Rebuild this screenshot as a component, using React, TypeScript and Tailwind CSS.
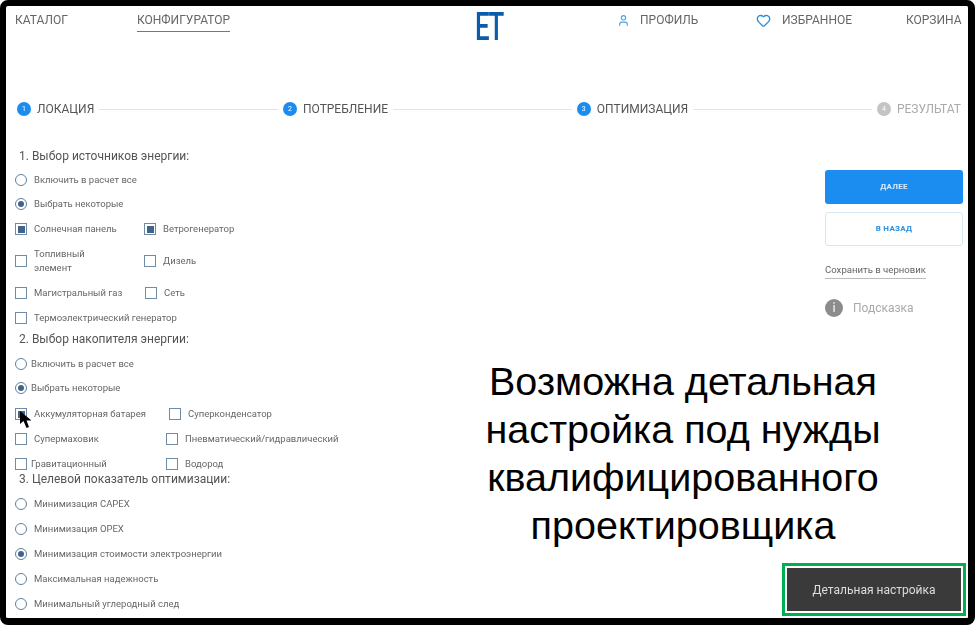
import { Heart, User } from "lucide-react"

const font = { fontFamily: "Roboto, 'Noto Sans', sans-serif" }

function Radio({ checked }: { checked?: boolean }) {
  return (
    <span className="flex h-3 w-3 shrink-0 items-center justify-center rounded-full border-[1.5px] border-[#5f7f9c]">
      {checked && <span className="h-1.5 w-1.5 rounded-full bg-[#41648c]" />}
    </span>
  )
}

function Check({ checked }: { checked?: boolean }) {
  return (
    <span className="flex h-3 w-3 shrink-0 items-center justify-center border-[1.5px] border-[#6f8ba5]">
      {checked && <span className="h-[7px] w-[7px] bg-[#41648c]" />}
    </span>
  )
}

function Label({ children }: { children: React.ReactNode }) {
  return <span className="text-[9.5px] leading-[14px] text-[#666]">{children}</span>
}

function Heading({ children, className }: { children: React.ReactNode; className: string }) {
  return <h2 className={`pl-[4px] text-[12px] font-normal leading-4 text-[#555] ${className}`}>{children}</h2>
}

function Step({ n, label, active }: { n: number; label: string; active?: boolean }) {
  return (
    <div className="flex shrink-0 items-center gap-[6px]">
      <span
        className={`flex h-[14px] w-[14px] items-center justify-center rounded-full text-[7px] text-white ${active ? "bg-[#1b8df0]" : "bg-[#c4c4c4]"}`}
      >
        {n}
      </span>
      <span className={`text-[12px] ${active ? "text-[#555]" : "text-[#aaa]"}`}>{label}</span>
    </div>
  )
}

function StepLine() {
  return <div className="mx-[5px] h-px flex-1 bg-[#e4e4e4]" />
}

export default function App() {
  return (
    <div className="h-[625px] w-[975px] overflow-hidden bg-white" style={font}>
      <div className="relative flex h-full flex-col rounded-lg border-[6px] border-r-[7px] border-b-[7px] border-black bg-white">
        <header className="flex h-[31px] items-start text-[12px] text-[#666] blur-[0.4px]">
          <a className="ml-[9px] mt-[5px] w-[122px]">КАТАЛОГ</a>
          <a className="mt-[5px] h-[21px] w-[93px] whitespace-nowrap border-b border-[#777]">КОНФИГУРАТОР</a>
          <div className="ml-[245px] mt-[1px] w-[25px] origin-left scale-x-[0.68] text-[38px] font-medium leading-[40px] tracking-[-2px] text-[#0b5cab]">ET</div>
          <div className="ml-[117px] mt-[5px] flex w-[139px] items-center">
            <User size={13} strokeWidth={2} className="text-[#4aa3e8]" />
            <span className="ml-[10px]">ПРОФИЛЬ</span>
          </div>
          <div className="mt-[5px] flex w-[150px] items-center">
            <Heart size={15} strokeWidth={2.2} className="text-[#2b8fe0]" />
            <span className="ml-[11px]">ИЗБРАННОЕ</span>
          </div>
          <a className="mt-[5px]">КОРЗИНА</a>
        </header>

        <nav className="mx-[11px] mt-[65px] flex h-[14px] w-[944px] items-center blur-[0.4px]">
          <Step n={1} label="ЛОКАЦИЯ" active />
          <StepLine />
          <Step n={2} label="ПОТРЕБЛЕНИЕ" active />
          <StepLine />
          <Step n={3} label="ОПТИМИЗАЦИЯ" active />
          <StepLine />
          <Step n={4} label="РЕЗУЛЬТАТ" />
        </nav>

        <main className="flex flex-1">
          <section className="w-[440px] pl-[9px] blur-[0.4px]">
            <Heading className="mt-[32px]">1. Выбор источников энергии:</Heading>
            <div className="mt-[9px] flex h-[14px] items-center gap-[7px]"><Radio /><Label>Включить в расчет все</Label></div>
            <div className="mt-[10px] flex h-[14px] items-center gap-[7px]"><Radio checked /><Label>Выбрать некоторые</Label></div>
            <div className="mt-[11px] flex h-[14px] items-center">
              <div className="flex w-[129px] items-center gap-[7px]"><Check checked /><Label>Солнечная панель</Label></div>
              <div className="flex items-center gap-[7px]"><Check checked /><Label>Ветрогенератор</Label></div>
            </div>
            <div className="mt-[7px] flex h-[36px] items-center">
              <div className="flex w-[129px] items-center gap-[7px]">
                <Check />
                <span className="flex w-[70px] flex-col"><Label>Топливный элемент</Label></span>
              </div>
              <div className="flex items-center gap-[7px]"><Check /><Label>Дизель</Label></div>
            </div>
            <div className="mt-[7px] flex h-[14px] items-center">
              <div className="flex w-[130px] items-center gap-[7px]"><Check /><Label>Магистральный газ</Label></div>
              <div className="flex items-center gap-[7px]"><Check /><Label>Сеть</Label></div>
            </div>
            <div className="mt-[11px] flex h-[14px] items-center gap-[7px]"><Check /><Label>Термоэлектрический генератор</Label></div>

            <Heading className="mt-[6px]">2. Выбор накопителя энергии:</Heading>
            <div className="mt-[10px] flex h-[14px] items-center gap-[4px]"><Radio /><Label>Включить в расчет все</Label></div>
            <div className="mt-[10px] flex h-[14px] items-center gap-[4px]"><Radio checked /><Label>Выбрать некоторые</Label></div>
            <div className="mt-[12px] flex h-[14px] items-center">
              <div className="flex w-[154px] items-center gap-[7px]"><Check checked /><Label>Аккумуляторная батарея</Label></div>
              <div className="flex items-center gap-[7px]"><Check /><Label>Суперконденсатор</Label></div>
            </div>
            <div className="mt-[11px] flex h-[14px] items-center">
              <div className="flex w-[151px] items-center gap-[7px]"><Check /><Label>Супермаховик</Label></div>
              <div className="flex items-center gap-[7px]"><Check /><Label>Пневматический/гидравлический</Label></div>
            </div>
            <div className="mt-[11px] flex h-[14px] items-center">
              <div className="flex w-[151px] items-center gap-[4px]"><Check /><Label>Гравитационный</Label></div>
              <div className="flex items-center gap-[7px]"><Check /><Label>Водород</Label></div>
            </div>

            <Heading className="mt-0">3. Целевой показатель оптимизации:</Heading>
            <div className="mt-[10px] flex h-[14px] items-center gap-[7px]"><Radio /><Label>Минимизация CAPEX</Label></div>
            <div className="mt-[11px] flex h-[14px] items-center gap-[7px]"><Radio /><Label>Минимизация OPEX</Label></div>
            <div className="mt-[11px] flex h-[14px] items-center gap-[7px]"><Radio checked /><Label>Минимизация стоимости электроэнергии</Label></div>
            <div className="mt-[11px] flex h-[14px] items-center gap-[7px]"><Radio /><Label>Максимальная надежность</Label></div>
            <div className="mt-[11px] flex h-[14px] items-center gap-[7px]"><Radio /><Label>Минимальный углеродный след</Label></div>
          </section>

          <section className="flex flex-1 flex-col">
            <div className="ml-[379px] mt-[54px] flex w-[138px] flex-col blur-[0.4px]">
              <button className="h-[34px] rounded-[3px] bg-[#1b8df0] text-[8px] font-bold tracking-[0.3px] text-[#d8ecfc]">ДАЛЕЕ</button>
              <button className="mt-[8px] h-[34px] rounded-[3px] border border-[#d5e8f5] bg-white text-[8px] font-bold tracking-[0.3px] text-[#2b8fe0]">В НАЗАД</button>
              <a className="mt-[18px] w-fit border-b border-[#bbb] pb-[2px] text-[9.6px] leading-3 text-[#666]">Сохранить в черновик</a>
              <div className="mt-[20px] flex items-center gap-[10px]">
                <span className="flex h-[18px] w-[18px] items-center justify-center rounded-full bg-[#8c8c8c] text-[12px] font-bold text-[#ddd]">i</span>
                <span className="text-[12px] text-[#aaa]">Подсказка</span>
              </div>
            </div>

            <p
              className="ml-[12px] mt-[40px] w-[450px] text-center text-[39.5px] leading-[48px] text-black"
              style={{ fontFamily: "'Liberation Sans', Arial, sans-serif" }}
            >
              Возможна детальная настройка под нужды квалифицированного проектировщика
            </p>

            <div className="ml-[336px] mt-[14px] w-[184px] border-[3px] border-[#00b050] p-[2px]">
              <button className="flex h-[43px] w-full items-center justify-center bg-[#3a3a3a] text-[12px] text-[#ddd] blur-[0.3px]">
                Детальная настройка
              </button>
            </div>
          </section>
        </main>

        <svg className="absolute left-[13px] top-[404px]" width="14" height="19" viewBox="0 0 14 19">
          <path d="M1 1 L1 14 L4.5 11 L7.5 18 L10 17 L7.5 10.5 L12.5 10.5 Z" fill="#000" />
        </svg>
      </div>
    </div>
  )
}
